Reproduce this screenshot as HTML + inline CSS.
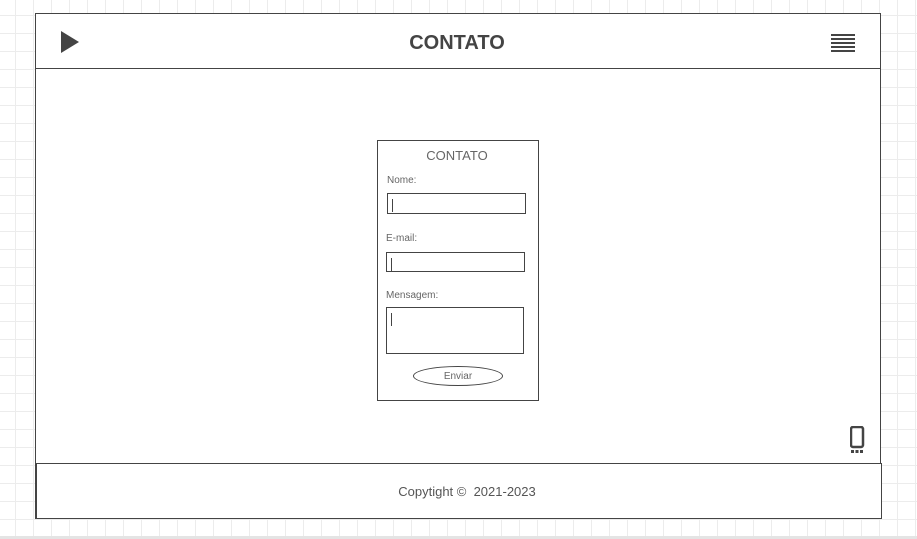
<!DOCTYPE html>
<html><head><style>
body{margin:0;width:917px;height:539px;position:relative;overflow:hidden;background-color:#fff;
background-image:linear-gradient(#ececec 1px,transparent 1px),linear-gradient(90deg,#ececec 1px,transparent 1px);
background-size:18px 18px;background-position:15px 15px;font-family:"Liberation Sans",sans-serif;}
.a{position:absolute;box-sizing:border-box}
</style></head><body>
<div class="a" style="left:35px;top:13px;width:846px;height:506px;border:1px solid #444;background:#fff"></div>
<div class="a" style="left:35px;top:68px;width:846px;height:1px;background:#444"></div>
<svg class="a" style="left:61px;top:31px" width="19" height="23"><polygon points="0,0 18,11 0,22" fill="#444"/></svg>
<div class="a" style="left:407px;width:100px;top:32px;text-align:center;font-weight:bold;font-size:20px;color:#444">CONTATO</div>
<svg class="a" style="left:831px;top:34px" width="24" height="18"><g fill="#444"><rect y="0" width="24" height="2"/><rect y="4" width="24" height="2"/><rect y="8" width="24" height="2"/><rect y="12" width="24" height="2"/><rect y="16" width="24" height="2"/></g></svg>
<div class="a" style="left:377px;top:140px;width:162px;height:261px;border:1px solid #444"></div>
<div class="a" style="left:376px;width:162px;top:148px;text-align:center;font-size:13px;color:#666">CONTATO</div>
<div class="a" style="left:387px;top:175px;font-size:10px;color:#666">Nome:</div>
<div class="a" style="left:387px;top:193px;width:139px;height:21px;border:1px solid #444"><div class="a" style="left:4px;top:5px;width:1px;height:13px;background:#444"></div></div>
<div class="a" style="left:386px;top:233px;font-size:10px;color:#666">E-mail:</div>
<div class="a" style="left:386px;top:252px;width:139px;height:20px;border:1px solid #444"><div class="a" style="left:4px;top:5px;width:1px;height:13px;background:#444"></div></div>
<div class="a" style="left:386px;top:290px;font-size:10px;color:#666">Mensagem:</div>
<div class="a" style="left:386px;top:307px;width:138px;height:47px;border:1px solid #444"><div class="a" style="left:4px;top:5px;width:1px;height:13px;background:#444"></div></div>
<div class="a" style="left:413px;top:366px;width:90px;height:20px;border:1px solid #444;border-radius:50%;text-align:center;font-size:10px;line-height:20px;color:#666">Enviar</div>
<svg class="a" style="left:850px;top:426px" width="15" height="29"><rect x="1" y="1" width="12" height="20" rx="2" fill="none" stroke="#444" stroke-width="2.5"/><g fill="#444"><rect x="1" y="24" width="3" height="3"/><rect x="5.5" y="24" width="3" height="3"/><rect x="10" y="24" width="3" height="3"/></g></svg>
<div class="a" style="left:36px;top:463px;width:846px;height:56px;border:1px solid #444;background:#fff"></div>
<div class="a" style="left:367px;width:200px;top:484px;text-align:center;font-size:13px;color:#555">Copytight ©&nbsp; 2021-2023</div>
<div class="a" style="left:0;top:536px;width:917px;height:3px;background:#e4e4e4"></div>
</body></html>
